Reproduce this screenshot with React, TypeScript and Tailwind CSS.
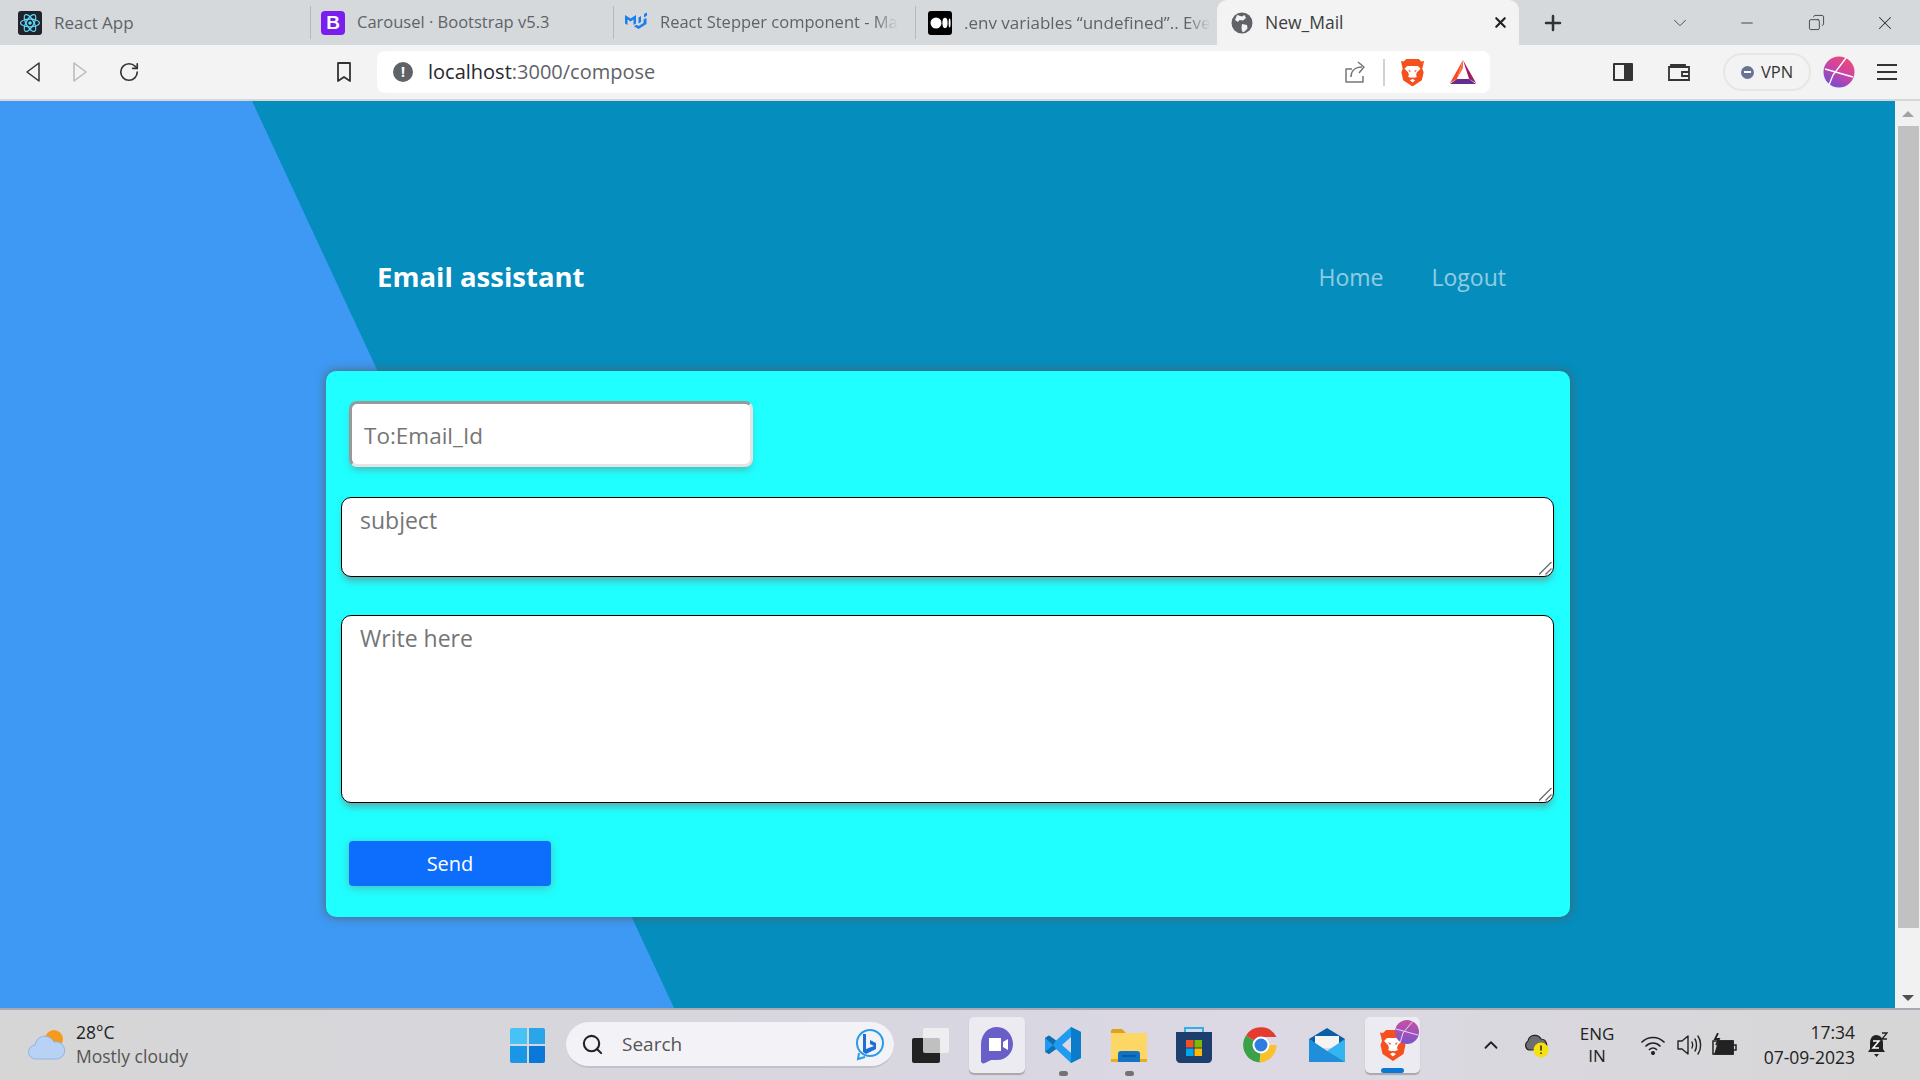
import { ChevronDown, ChevronUp, Copy, Minus, Plus, RotateCw, Search, X } from 'lucide-react';
import type { ReactNode } from 'react';

const font = "font-['Open_Sans','Noto_Sans',sans-serif]";

function ReactIcon() {
    return (
        <svg width="24" height="24" viewBox="0 0 24 24" className="rounded-[3px] bg-[#20232a]">
            <g fill="none" stroke="#61dafb" strokeWidth="1.2">
                <ellipse cx="12" cy="12" rx="9.5" ry="3.8" />
                <ellipse cx="12" cy="12" rx="9.5" ry="3.8" transform="rotate(60 12 12)" />
                <ellipse cx="12" cy="12" rx="9.5" ry="3.8" transform="rotate(120 12 12)" />
            </g>
            <circle cx="12" cy="12" r="1.8" fill="#61dafb" />
        </svg>
    );
}

function BootstrapIcon() {
    return (
        <div className="w-6 h-6 rounded-[4px] bg-[#7a1df0] text-white text-[19px] font-bold leading-6 text-center font-['Liberation_Sans',sans-serif]">
            B
        </div>
    );
}

function MuiIcon() {
    return (
        <svg width="24" height="24" viewBox="0 0 24 24" fill="#1a7fe8">
            <path d="M1 4l5.500 3.500L12 4v8.500l-2.500 1.500V8.500L6.500 10.500 3.500 8.500V14L1 12.500z" />
            <path d="M20 3l3-1.500v3L20 6.500zM19.500 8.500l3-1.500v6l-8 5-4.500-2.700 2.500-1.500 2 1.200 5-3zM14.500 6.500L17 5v6l-2.500 1.500z" />
        </svg>
    );
}

function MediumIcon() {
    return (
        <svg width="24" height="24" viewBox="0 0 24 24" className="rounded-[3px] bg-black">
            <ellipse cx="8" cy="12" rx="5.5" ry="5.6" fill="#fff" />
            <ellipse cx="17" cy="12" rx="2.6" ry="5.2" fill="#fff" />
            <ellipse cx="21.6" cy="12" rx="1" ry="4.6" fill="#fff" />
        </svg>
    );
}

function GlobeIcon() {
    return (
        <svg width="22" height="22" viewBox="0 0 22 22">
            <circle cx="11" cy="11" r="10.5" fill="#5f6368" />
            <path d="M6 3l5 1.5L13.5 3 15 6l-3 2.5-3.5-.5L7 10 4 8zM11 12l5 1 .5 3.5L13 20l-2-.5-.5-4z" fill="#f3f3f3" />
        </svg>
    );
}

function BraveIcon({ size }: { size: number }) {
    return (
        <svg width={size} height={size * 1.14} viewBox="0 0 28 32">
            <path d="M7 1h14l3 3 3-.5L25 12l1.500 4-2 9L14 32 3.500 25l-2-9L3 12 1 3.500 4 4z" fill="#f4511e" />
            <path d="M8 9h12l3 3-4 4-1 3 1 2-5 2-5-2 1-2-1-3-4-4z" fill="#fff" />
            <path d="M9 13l3 1.500-1 1.500zM19 13l-3 1.500 1 1.500zM12 22h4l-2 2z" fill="#f4511e" />
            <path d="M11 25l3-1.500 3 1.500-3 2.500z" fill="#fff" />
        </svg>
    );
}

function BatIcon() {
    return (
        <svg width="28" height="26" viewBox="0 0 28 26">
            <path d="M14 1L1 24l7-4z" fill="#ff4724" />
            <path d="M14 1l13 23-7-4z" fill="#9e1f63" />
            <path d="M1 25h26l-7-5H8z" fill="#662d91" />
            <path d="M14 9l5.500 10h-11z" fill="#fff" />
            <path d="M14 1L8.500 19 14 9z" fill="#ff6a3d" />
        </svg>
    );
}

function AvatarIcon() {
    return (
        <svg width="32" height="32" viewBox="0 0 32 32">
            <defs>
                <linearGradient id="avatarFill" x1="0.8" y1="0" x2="0.2" y2="1">
                    <stop offset="0" stopColor="#f04a70" />
                    <stop offset="0.5" stopColor="#c843a8" />
                    <stop offset="1" stopColor="#6a4fd8" />
                </linearGradient>
            </defs>
            <circle cx="16" cy="16" r="15.500" fill="url(#avatarFill)" />
            <path d="M2 13l28 8M23 2L10 19l-4 10" stroke="#fff" strokeWidth="1.400" fill="none" />
        </svg>
    );
}

function Tab({ icon, title, width, pad, textSize, fade }: { icon: ReactNode; title: string; width: string; pad: string; textSize: string; fade?: boolean }) {
    return (
        <div className={`${width} ${pad} h-[45px] flex items-center gap-3 shrink-0`}>
            <div className="shrink-0 w-6 h-6">{icon}</div>
            <span className={`${textSize} ${fade ? '[mask-image:linear-gradient(to_right,black_90%,transparent)]' : ''} text-[#5f6368] whitespace-nowrap`}>
                {title}
            </span>
        </div>
    );
}

function TabDivider() {
    return <div className="w-px h-[33px] bg-[#b5b9bc] shrink-0" />;
}

function TabStrip() {
    return (
        <div className="h-[45px] bg-[#d5d9dc] flex items-center">
            <Tab icon={<ReactIcon />} title="React App" width="w-[310px]" pad="pl-[18px]" textSize="text-[17px]" />
            <TabDivider />
            <Tab icon={<BootstrapIcon />} title="Carousel · Bootstrap v5.3" width="w-[302px]" pad="pl-[10px]" textSize="text-[16.500px]" />
            <TabDivider />
            <Tab icon={<MuiIcon />} title="React Stepper component - Ma" width="w-[301px]" pad="pl-[10px]" textSize="text-[16.500px]" fade />
            <TabDivider />
            <Tab icon={<MediumIcon />} title=".env variables “undefined”.. Eve" width="w-[301px]" pad="pl-[12px]" textSize="text-[17px]" fade />
            <div className="w-[302px] h-[45px] bg-[#f3f3f3] rounded-t-[10px] flex items-center pl-[14px] shrink-0">
                <GlobeIcon />
                <span className="ml-[12px] text-[17.500px] text-[#3c4043]">New_Mail</span>
                <X className="w-[17px] h-[17px] ml-auto mr-[10px] text-[#222]" strokeWidth={3} />
            </div>
            <div className="w-[33px] ml-[17px] flex justify-center"><Plus className="w-6 h-6 text-[#333]" strokeWidth={2.5} /></div>
            <div className="w-8 ml-[95px] flex justify-center"><ChevronDown className="w-[22px] h-[22px] text-[#444]" strokeWidth={1} /></div>
            <div className="w-8 ml-[35px] flex justify-center"><Minus className="w-[18px] h-[18px] text-[#333]" strokeWidth={1.2} /></div>
            <div className="w-8 ml-[37px] flex justify-center"><Copy className="w-[17px] h-[17px] text-[#333] -scale-x-100" strokeWidth={1.2} /></div>
            <div className="w-8 ml-[37px] flex justify-center"><X className="w-[22px] h-[22px] text-[#333]" strokeWidth={1.1} /></div>
        </div>
    );
}

function Toolbar() {
    return (
        <div className="h-[56px] bg-[#f3f3f3] border-b-2 border-[#d7d7d7] flex items-start pt-[6px]">
            <div className="h-[42px] w-[66px] flex items-center justify-center">
                <svg width="20" height="24" viewBox="0 0 20 24" fill="none" stroke="#333" strokeWidth="1.500"><path d="M16 3v18L4 12z" strokeLinejoin="round" /></svg>
            </div>
            <div className="h-[42px] w-[28px] flex items-center justify-center">
                <svg width="20" height="24" viewBox="0 0 20 24" fill="none" stroke="#b9b9b9" strokeWidth="1.500"><path d="M4 3v18l12-9z" strokeLinejoin="round" /></svg>
            </div>
            <div className="h-[42px] w-[70px] flex items-center justify-center">
                <RotateCw className="w-[22px] h-[22px] text-[#333]" strokeWidth={1.800} />
            </div>
            <div className="h-[42px] w-[40px] ml-[160px] flex items-center justify-center">
                <svg width="18" height="24" viewBox="0 0 18 24" fill="none" stroke="#333" strokeWidth="1.800"><path d="M3 3h12v18l-6-4-6 4z" strokeLinejoin="round" /></svg>
            </div>
            <div className="ml-[13px] w-[1113px] h-[42px] bg-white rounded-[8px] flex items-center pl-[16px]">
                <div className="w-[20px] h-[20px] rounded-full bg-[#5f6368] text-white text-[14px] font-bold leading-5 text-center">!</div>
                <span className="ml-[15px] text-[20px] text-[#5f6368]"><span className="text-[#26282b]">localhost</span>:3000/compose</span>
                <div className="ml-auto flex items-center">
                    <svg width="24" height="26" viewBox="0 0 24 26" fill="none" stroke="#777" strokeWidth="1.500">
                        <path d="M9 10H3v13h17v-6M8 18c0-6 4-10 11-10M15 3l6 5-5 6" strokeLinejoin="round" />
                    </svg>
                    <div className="w-[2px] h-[27px] bg-[#d2d2d2] ml-[16px]" />
                    <div className="ml-[15px] flex"><BraveIcon size={25} /></div>
                    <div className="ml-[24px] mr-[13px] flex"><BatIcon /></div>
                </div>
            </div>
            <div className="h-[42px] w-[40px] ml-[113px] flex items-center justify-center">
                <div className="w-[20px] h-[18px] border-2 border-[#333] flex justify-end rounded-[1px]"><div className="w-[7px] bg-[#333]" /></div>
            </div>
            <div className="h-[42px] w-[40px] ml-[16px] flex items-center justify-center">
                <svg width="22" height="20" viewBox="0 0 22 20" fill="none" stroke="#333" strokeWidth="1.800">
                    <path d="M3 5V3h14v2M1 5h20v13H1zM14 10h7v4h-7z" />
                </svg>
            </div>
            <div className="h-[38px] w-[88px] ml-[24px] mt-[2px] rounded-full border-2 border-[#e6e6e6] flex items-center justify-center gap-[7px]">
                <div className="w-[13px] h-[13px] rounded-full bg-[#6b7394] flex items-center justify-center"><div className="w-[7px] h-[2px] bg-white" /></div>
                <span className="text-[16.500px] text-[#333]">VPN</span>
            </div>
            <div className="h-[42px] w-[36px] ml-[10px] flex items-center justify-center"><AvatarIcon /></div>
            <div className="h-[42px] w-[32px] ml-[14px] flex flex-col items-center justify-center gap-[5px]">
                <div className="w-[20px] h-[2px] bg-[#333]" />
                <div className="w-[20px] h-[2px] bg-[#333]" />
                <div className="w-[20px] h-[2px] bg-[#333]" />
            </div>
        </div>
    );
}

function ResizeGrip() {
    return (
        <svg className="absolute right-[2px] bottom-[2px] pointer-events-none" width="13" height="13" viewBox="0 0 13 13" stroke="#6f6f6f" strokeWidth="1.400">
            <path d="M0 12.500L12.500 0M6.500 12.500L12.500 6.500" />
        </svg>
    );
}

function ComposeCard() {
    const areaClass = 'block w-full h-full rounded-[10px] bg-white border border-black px-[18px] pt-[5px] text-[23px] leading-[34px] placeholder:text-[#757575] shadow-[0_6px_7px_-2px_rgba(120,120,120,0.6)] outline-none resize-none';

    return (
        <div className="w-[1244px] h-[546px] bg-[#1fffff] rounded-[10px] shadow-[0_0_10px_rgba(90,90,90,0.9)] px-[15px] pt-[30px]">
            <input
                placeholder="To:Email_Id"
                className="block ml-[8px] w-[404px] h-[66px] rounded-[8px] bg-white border-[3px] border-t-[#999999] border-l-[#999999] border-r-[#e4e4e4] border-b-[#e4e4e4] px-[12px] pt-[2px] text-[22.500px] text-black placeholder:text-[#757575] shadow-[0_5px_7px_-2px_rgba(120,120,120,0.5)] outline-none"
            />
            <div className="relative mt-[30px] w-[1213px] h-[80px]">
                <textarea placeholder="subject" className={areaClass} />
                <ResizeGrip />
            </div>
            <div className="relative mt-[38px] w-[1213px] h-[188px]">
                <textarea placeholder="Write here" className={areaClass} />
                <ResizeGrip />
            </div>
            <button className="block mt-[38px] ml-[8px] w-[202px] h-[45px] rounded-[4px] bg-[#0d6efd] text-white text-[20px] shadow-[0_2px_8px_rgba(120,120,120,0.5)]">
                Send
            </button>
        </div>
    );
}

function Scrollbar() {
    return (
        <div className="w-[25px] bg-[#f1f1f1] flex flex-col items-center shrink-0">
            <div className="h-[25px] flex items-center justify-center">
                <div className="w-0 h-0 border-x-[6px] border-x-transparent border-b-[6px] border-b-[#a3a3a3]" />
            </div>
            <div className="w-[21px] ml-px h-[802px] bg-[#c1c1c1]" />
            <div className="flex-1 flex items-end pb-[7px]">
                <div className="w-0 h-0 border-x-[6px] border-x-transparent border-t-[6px] border-t-[#505050]" />
            </div>
        </div>
    );
}

function TaskIcon({ ml, children }: { ml: string; children: ReactNode }) {
    return <div className={`${ml} w-[56px] h-[56px] flex items-center justify-center relative shrink-0`}>{children}</div>;
}

function Dot() {
    return <div className="absolute bottom-[-3px] left-[24px] w-[9px] h-[5px] rounded-full bg-[#737373]" />;
}

function Taskbar() {
    return (
        <div className="h-[72px] border-t-2 border-[#aaa8b0] bg-[linear-gradient(to_right,#d6d6d6,#d8d6e0_50%,#dcd9e4_65%,#d6d6d6)] flex items-center">
            <div className="ml-[28px] w-[38px] flex justify-center">
                <svg width="38" height="34" viewBox="0 0 38 34">
                    <circle cx="26" cy="11" r="9" fill="#f59a1b" />
                    <path d="M8 31a7 7 0 0 1-1-14 10 10 0 0 1 19-3 8.500 8.500 0 0 1 4 17z" fill="#b7d2f5" stroke="#8fb4ea" />
                </svg>
            </div>
            <div className="ml-[10px] w-[434px] text-[17.500px] leading-[24px] -mt-[2px]">
                <div className="text-[#222]">28°C</div>
                <div className="text-[#555]">Mostly cloudy</div>
            </div>
            <div className="w-[35px] h-[35px] grid grid-cols-2 gap-[2px] shrink-0">
                <div className="bg-[#46c2f4] rounded-tl-[2px]" />
                <div className="bg-[#2aa5ea] rounded-tr-[2px]" />
                <div className="bg-[#1a96e6] rounded-bl-[2px]" />
                <div className="bg-[#0a78d8] rounded-br-[2px]" />
            </div>
            <div className="ml-[21px] w-[328px] h-[46px] rounded-full bg-[#f3f3f7] border-b-2 border-[#c3c1cb] flex items-center pl-[15px] pr-[8px] shrink-0">
                <Search className="w-[23px] h-[23px] text-[#222]" strokeWidth={2.200} />
                <span className="ml-[18px] text-[19px] text-[#555]">Search</span>
                <svg className="ml-auto" width="32" height="34" viewBox="0 0 32 34" fill="none">
                    <circle cx="16" cy="16" r="13" stroke="#2b9be8" strokeWidth="2" />
                    <path d="M5 26l-1 6 7-2" stroke="#2b9be8" strokeWidth="2" />
                    <path d="M12 7v15l8-3-4-2v-4l6 3v6l-10 5-3-2V7z" fill="#1d6fd6" />
                </svg>
            </div>
            <div className="ml-[18px] w-[37px] h-[35px] relative shrink-0">
                <div className="absolute left-0 bottom-0 w-[28px] h-[25px] bg-[#222] rounded-[2px]" />
                <div className="absolute right-0 top-0 w-[26px] h-[25px] bg-[#f6f6f6]/75 rounded-[2px]" />
            </div>
            <div className="ml-[20px] w-[56px] h-[56px] rounded-[5px] bg-[#ecebf2] shadow-[0_2px_1px_rgba(120,120,120,0.5)] flex items-center justify-center shrink-0">
                <svg width="36" height="40" viewBox="0 0 36 40">
                    <path d="M18 2C8 2 2 10 2 20v16c0 2 2 3 4 2l6-3h6c10 0 16-8 16-16S28 2 18 2z" fill="#6a5fc8" />
                    <path d="M10 13h12v13H10zM24 17l5-3v11l-5-3z" fill="#fff" />
                </svg>
            </div>
            <TaskIcon ml="ml-[10px]">
                <svg width="36" height="36" viewBox="0 0 36 36">
                    <path d="M26 0l10 5v26l-10 5-15-14-7 5-4-2.500V11l4-2.500 7 5zM26 10l-9 8 9 8z" fill="#1f9cf0" />
                    <path d="M26 0l10 5v26l-10 5z" fill="#0a7cc9" />
                    <path d="M4 8.500l7 5-3 4.500-8-7zM0 25l8-7 3 4-7 5z" fill="#0e6fb5" />
                </svg>
                <Dot />
            </TaskIcon>
            <TaskIcon ml="ml-[10px]">
                <svg width="36" height="33" viewBox="0 0 36 33">
                    <path d="M0 2c0-1 1-2 2-2h9l4 4h21v8H0z" fill="#dfa11a" />
                    <path d="M0 4h36v29H0z" fill="#fcd765" />
                    <path d="M0 30h36v3H0z" fill="#e9ad1d" />
                    <path d="M7 25c0-2 1-3 3-3h16c2 0 3 1 3 3v8H7z" fill="#1272c4" />
                    <path d="M11 27h14" stroke="#0a4f94" strokeWidth="1.400" />
                </svg>
                <Dot />
            </TaskIcon>
            <TaskIcon ml="ml-[9px]">
                <svg width="36" height="36" viewBox="0 0 36 36">
                    <path d="M9 6V1h18v5" fill="none" stroke="#2cb2ea" strokeWidth="2" />
                    <path d="M0 5h36v27c0 2-2 4-4 4H4c-2 0-4-2-4-4z" fill="#1d3f6e" />
                    <rect x="10" y="13" width="7.500" height="7.500" fill="#f25022" />
                    <rect x="18.500" y="13" width="7.500" height="7.500" fill="#7fba00" />
                    <rect x="10" y="21.500" width="7.500" height="7.500" fill="#00a4ef" />
                    <rect x="18.500" y="21.500" width="7.500" height="7.500" fill="#ffb900" />
                </svg>
            </TaskIcon>
            <TaskIcon ml="ml-[11px]">
                <svg width="36" height="36" viewBox="0 0 36 36">
                    <path d="M18 18L3 8.500A17.500 17.500 0 0 1 33.500 10H18z" fill="#e53a2f" />
                    <path d="M18 18h15.500a17.500 17.500 0 0 1-17 17.500z" fill="#fbc02d" />
                    <path d="M18 18L16.500 35.500A17.500 17.500 0 0 1 3 8.500z" fill="#3ba148" />
                    <circle cx="18" cy="18" r="8.500" fill="#fff" />
                    <circle cx="18" cy="18" r="6.500" fill="#2f7de1" />
                </svg>
            </TaskIcon>
            <TaskIcon ml="ml-[10px]">
                <svg width="36" height="34" viewBox="0 0 36 34">
                    <path d="M18 0L36 11v6H0v-6z" fill="#0b5fa8" />
                    <path d="M6 8h24v12H6z" fill="#f4f4f4" />
                    <path d="M0 11l18 12 18-12v23H0z" fill="#35b4f0" />
                    <path d="M0 34V11l18 12 18 11z" fill="#1f8fdc" />
                </svg>
            </TaskIcon>
            <div className="ml-[10px] w-[55px] h-[56px] rounded-[5px] bg-[#ecebf2] shadow-[0_2px_1px_rgba(120,120,120,0.5)] relative flex items-center justify-center shrink-0">
                <BraveIcon size={28} />
                <div className="absolute right-[1px] top-[3px] w-[24px] h-[24px] rounded-full overflow-hidden bg-[linear-gradient(to_bottom,#c84fa5,#7b55c8)]">
                    <svg width="24" height="24" viewBox="0 0 24 24" stroke="#e8d7ef" strokeWidth="1" fill="none">
                        <path d="M1 9l22 6M18 1L8 13 5 23" />
                    </svg>
                </div>
                <div className="absolute bottom-0 left-[16px] w-[23px] h-[5px] rounded-full bg-[#0a78d4]" />
            </div>
            <div className="ml-[55px] w-8 flex justify-center"><ChevronUp className="w-[22px] h-[22px] text-[#222]" strokeWidth={2} /></div>
            <div className="ml-[14px] w-8 flex justify-center relative">
                <svg width="24" height="26" viewBox="0 0 24 26">
                    <path d="M4 18a5 5 0 0 1-1-9 7 7 0 0 1 13-2 6 6 0 0 1 3 11z" fill="#6e6e6e" stroke="#222" strokeWidth="1.200" />
                    <circle cx="16" cy="18" r="7.500" fill="#f5e10d" />
                    <path d="M16 13.500v5M16 20.500v1.500" stroke="#222" strokeWidth="1.500" />
                </svg>
            </div>
            <div className="ml-[20px] w-12 text-center text-[17px] leading-[22px] text-[#222]">
                <div>ENG</div>
                <div>IN</div>
            </div>
            <div className="ml-[16px] w-8 flex justify-center">
                <svg width="24" height="20" viewBox="0 0 24 20" fill="none" stroke="#222" strokeWidth="1.700" strokeLinecap="round">
                    <path d="M1 7c6-6 16-6 22 0M5 11c4-4 10-4 14 0M8.500 14.500c2-2 5-2 7 0" />
                    <circle cx="12" cy="18" r="1.200" fill="#222" />
                </svg>
            </div>
            <div className="ml-[5px] w-8 flex justify-center">
                <svg width="26" height="22" viewBox="0 0 26 22" fill="none" stroke="#222" strokeWidth="1.400" strokeLinecap="round">
                    <path d="M1 7h4l6-5v18l-6-5H1zM15 8c1 2 1 4 0 6M18 5c2 3 2 9 0 12M21 2c3.500 5 3.500 13 0 18" strokeLinejoin="round" />
                </svg>
            </div>
            <div className="ml-[3px] w-8 flex justify-center">
                <svg width="26" height="24" viewBox="0 0 26 24" fill="none" stroke="#222" strokeWidth="1.500">
                    <path d="M1 8h20v13H1zM21 12h3v5h-3z" />
                    <path d="M7 8h14v13H3z" fill="#222" />
                    <path d="M6 0L3 6h4l-3 6" strokeWidth="1.800" />
                </svg>
            </div>
            <div className="w-[117px] pr-[3px] text-right text-[17.500px] leading-[25px] text-[#222]">
                <div>17:34</div>
                <div>07-09-2023</div>
            </div>
            <div className="ml-[5px] w-7 flex justify-center">
                <svg width="22" height="26" viewBox="0 0 22 26">
                    <path d="M10 3c5 0 7 4 7 8v6l2 3H2l2-3v-6c0-4 2-8 6-8zM8 22h5l-2.500 3z" fill="#222" />
                    <path d="M7 9h6l-6 7h6" stroke="#fff" strokeWidth="1.500" fill="none" />
                    <path d="M16 1h5l-5 6h5" stroke="#222" strokeWidth="1.300" fill="none" />
                </svg>
            </div>
        </div>
    );
}

export default function App() {
    return (
        <div className={`${font} w-[1920px] h-[1080px] overflow-hidden flex flex-col`}>
            <TabStrip />
            <Toolbar />
            <div className="flex h-[907px] bg-[#058dbd]">
                <main className="relative flex-1 min-w-0">
                    <div className="absolute inset-y-0 left-0 w-[674px] bg-[#3d99f3] [clip-path:polygon(0_0,252px_0,674px_100%,0_100%)]" />
                    <div className="relative ml-[326px] w-[1244px] pt-[146px]">
                        <nav className="h-[60px] mb-[64px] flex items-center pl-[51px] pr-[64px]">
                            <span className="text-[27.500px] font-bold text-white">Email assistant</span>
                            <div className="ml-auto flex items-center gap-[48px] text-[23px] text-white/55">
                                <span>Home</span>
                                <span>Logout</span>
                            </div>
                        </nav>
                        <ComposeCard />
                    </div>
                </main>
                <Scrollbar />
            </div>
            <Taskbar />
        </div>
    );
}
